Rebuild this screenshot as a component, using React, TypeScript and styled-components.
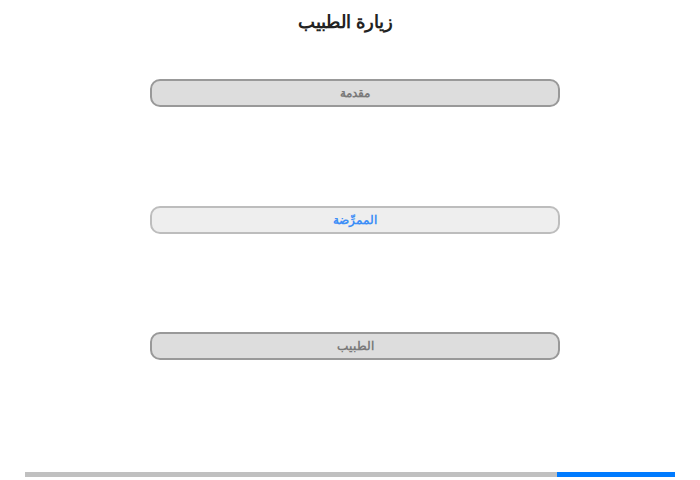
import React from "react";
import styled, { createGlobalStyle } from "styled-components";

const Global = createGlobalStyle`
  html, body { margin: 0; padding: 0; background: #fff; }
  body { font-family: "Liberation Sans", Arial, sans-serif; }
`;

const Page = styled.div`
  width: 700px;
  height: 480px;
  display: flex;
  flex-direction: column;
  box-sizing: border-box;
`;

const Title = styled.h1`
  margin: 0;
  padding: 10px 9px 0 0;
  height: 24px;
  line-height: 24px;
  font-size: 18px;
  font-weight: bold;
  text-align: center;
  color: #222;
  direction: rtl;
`;

const List = styled.div`
  display: flex;
  flex-direction: column;
  gap: 98.5px;
  margin-top: 45px;
  padding-left: 150px;
`;

const Box = styled.div<{ $active?: boolean }>`
  width: 410px;
  height: 28px;
  box-sizing: border-box;
  border: 2px solid ${(p) => (p.$active ? "#bdbdbd" : "#999")};
  background: ${(p) => (p.$active ? "#eeeeee" : "#dddddd")};
  border-radius: 10px;
  display: flex;
  align-items: center;
  justify-content: center;
  font-size: 12px;
  font-weight: bold;
  color: ${(p) => (p.$active ? "#3d8ef7" : "#7a7a7a")};
  direction: rtl;
`;

const Spacer = styled.div`
  flex: 1;
`;

const Progress = styled.div`
  display: flex;
  margin: 0 25px 3px 25px;
  height: 5px;
`;

const Track = styled.div`
  flex: 1;
  background: #c0c0c0;
`;

const Fill = styled.div`
  width: 118px;
  background: #007bff;
`;

export default function App() {
  return (
    <Page>
      <Global />
      <Title>زيارة الطبيب</Title>
      <List>
        <Box>مقدمة</Box>
        <Box $active>الممرِّضة</Box>
        <Box>الطبيب</Box>
      </List>
      <Spacer />
      <Progress>
        <Track />
        <Fill />
      </Progress>
    </Page>
  );
}
